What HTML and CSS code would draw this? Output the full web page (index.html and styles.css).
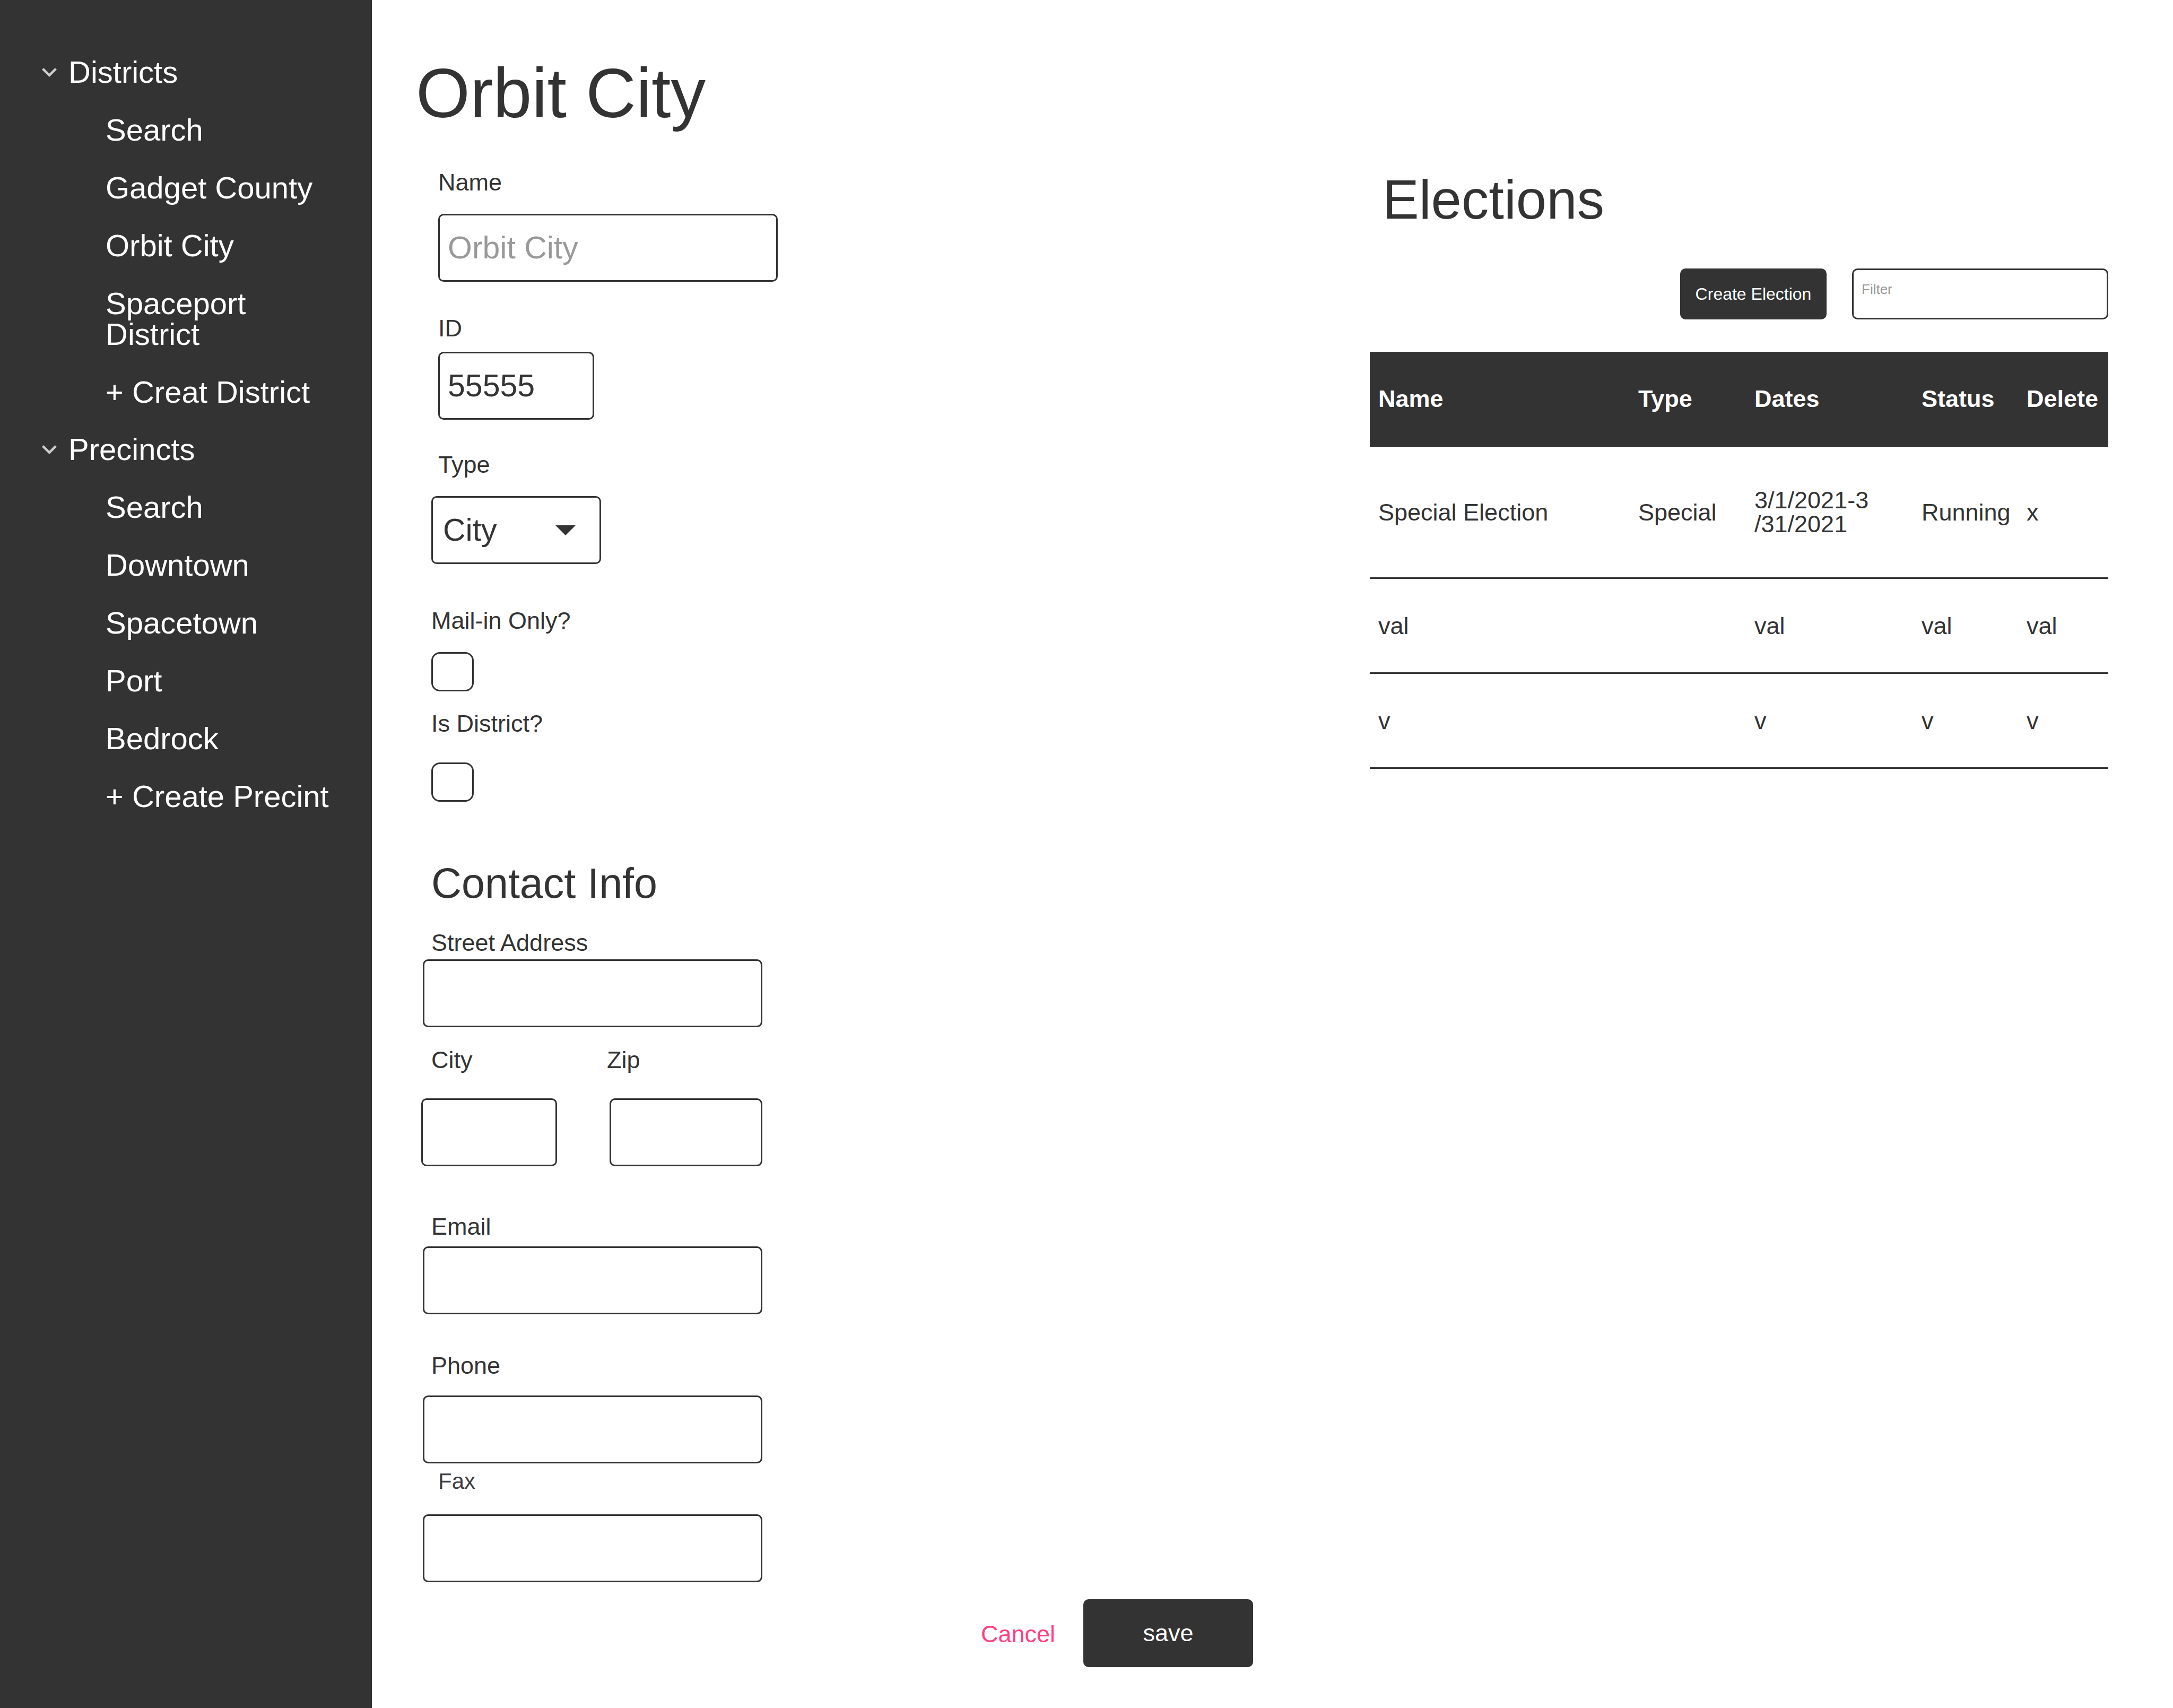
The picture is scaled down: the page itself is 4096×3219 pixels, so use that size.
FILE: index.html
```html
<!DOCTYPE html>
<html lang="en">
<head>
<meta charset="utf-8">
<title>Orbit City</title>
<link rel="stylesheet" href="styles.css">
</head>
<body>
<div class="app">
  <nav class="sidebar">
    <section class="group">
      <h2 class="group-title">
        <svg class="chevron" viewBox="0 0 28 17" aria-hidden="true"><path d="M3.3 0 14 10.7 24.700 0 28 3.300 14 17 0 3.300z"/></svg>
        Districts
      </h2>
      <ul class="links">
        <li><a href="#">Search</a></li>
        <li><a href="#">Gadget County</a></li>
        <li><a href="#">Orbit City</a></li>
        <li><a href="#">Spaceport<br>District</a></li>
        <li><a href="#">+ Creat District</a></li>
      </ul>
    </section>
    <section class="group">
      <h2 class="group-title">
        <svg class="chevron" viewBox="0 0 28 17" aria-hidden="true"><path d="M3.3 0 14 10.7 24.700 0 28 3.300 14 17 0 3.300z"/></svg>
        Precincts
      </h2>
      <ul class="links">
        <li><a href="#">Search</a></li>
        <li><a href="#">Downtown</a></li>
        <li><a href="#">Spacetown</a></li>
        <li><a href="#">Port</a></li>
        <li><a href="#">Bedrock</a></li>
        <li><a href="#">+ Create Precint</a></li>
      </ul>
    </section>
  </nav>

  <main class="main">
    <h1 class="title">Orbit City</h1>
    <div class="columns">
      <form class="form" id="district">
        <div class="field field-name">
          <label for="name">Name</label>
          <input class="box" id="name" type="text" placeholder="Orbit City">
        </div>
        <div class="field field-id">
          <label for="code">ID</label>
          <input class="box" id="code" type="text" value="55555">
        </div>
        <div class="field field-type">
          <label for="type">Type</label>
          <div class="select">
            <select class="box" id="type"><option>City</option></select>
            <svg class="arrow" viewBox="0 0 38 19" aria-hidden="true"><path d="M0 0h38L19 19z"/></svg>
          </div>
        </div>
        <div class="field field-mail">
          <label for="mail">Mail-in Only?</label>
          <input class="check" id="mail" type="checkbox">
        </div>
        <div class="field field-district">
          <label for="isdistrict">Is District?</label>
          <input class="check" id="isdistrict" type="checkbox">
        </div>

        <h2 class="subtitle">Contact Info</h2>

        <div class="field contact field-street">
          <label for="street">Street Address</label>
          <input class="box" id="street" type="text">
        </div>
        <div class="pair">
          <div class="field field-city">
            <label for="city">City</label>
            <input class="box" id="city" type="text">
          </div>
          <div class="field field-zip">
            <label for="zip">Zip</label>
            <input class="box" id="zip" type="text">
          </div>
        </div>
        <div class="field contact field-email">
          <label for="email">Email</label>
          <input class="box" id="email" type="email">
        </div>
        <div class="field contact field-phone">
          <label for="phone">Phone</label>
          <input class="box" id="phone" type="tel">
        </div>
        <div class="field contact field-fax">
          <label for="fax">Fax</label>
          <input class="box" id="fax" type="tel">
        </div>
      </form>

      <section class="elections">
        <h2 class="elections-title">Elections</h2>
        <div class="toolbar">
          <button class="button button-small" type="button">Create Election</button>
          <input class="box filter" type="text" placeholder="Filter" aria-label="Filter">
        </div>
        <table class="table">
          <colgroup>
            <col><col class="col-type"><col class="col-dates"><col class="col-status"><col class="col-delete">
          </colgroup>
          <thead>
            <tr><th>Name</th><th>Type</th><th>Dates</th><th>Status</th><th>Delete</th></tr>
          </thead>
          <tbody>
            <tr class="tall"><td>Special Election</td><td>Special</td><td>3/1/2021-3<br>/31/2021</td><td>Running</td><td>x</td></tr>
            <tr><td>val</td><td></td><td>val</td><td>val</td><td>val</td></tr>
            <tr><td>v</td><td></td><td>v</td><td>v</td><td>v</td></tr>
          </tbody>
        </table>
      </section>
    </div>

    <div class="actions">
      <a class="cancel" href="#">Cancel</a>
      <button class="button" type="submit" form="district">save</button>
    </div>
  </main>
</div>
</body>
</html>
```
FILE: styles.css
```css
* {
  box-sizing: border-box;
}

body {
  margin: 0;
  background: #fff;
  color: #333;
  font-family: "Liberation Sans", Arial, sans-serif;
  font-size: 45px;
  line-height: 46px;
}

h1,
h2,
ul {
  margin: 0;
  padding: 0;
  font-weight: 400;
}

input,
select,
button {
  margin: 0;
  color: inherit;
  font-family: inherit;
}

.app {
  display: flex;
  min-height: 100vh;
}

/* Sidebar */

.sidebar {
  display: flex;
  flex: none;
  flex-direction: column;
  gap: 50px;
  width: 701px;
  padding-top: 107px;
  background: #333;
  color: #fff;
  font-size: 58px;
  line-height: 58px;
}

.group {
  display: flex;
  flex-direction: column;
  gap: 51px;
}

.group-title {
  display: flex;
  align-items: center;
  gap: 22px;
  padding-left: 79px;
  font-size: 58px;
}

.chevron {
  width: 28px;
  height: 17px;
  fill: #ccc;
}

.links {
  display: flex;
  flex-direction: column;
  gap: 51px;
  padding-left: 199px;
  list-style: none;
}

.links a {
  display: block;
  color: inherit;
  text-decoration: none;
}

/* Page */

.main {
  flex: 1;
  padding: 110px 122px 75px 83px;
}

.title {
  font-size: 131px;
  line-height: 131px;
}

.columns {
  display: grid;
  grid-template-columns: 1798fr 1392fr;
  margin-top: 80px;
}

/* Form */

.form {
  display: flex;
  flex-direction: column;
  align-items: flex-start;
}

.field {
  display: flex;
  flex-direction: column;
  align-items: flex-start;
  gap: 36px;
  margin-left: 29px;
}

.box {
  width: 640px;
  height: 128px;
  padding: 0 15px;
  border: 3px solid #333;
  border-radius: 10px;
  background: #fff;
  font-size: 59px;
}

.box::placeholder {
  color: #999;
  opacity: 1;
}

.field-name {
  margin-left: 42px;
}

.field-id {
  gap: 21px;
  margin: 65px 0 62px 42px;
}

.field-id .box {
  width: 294px;
}

.field-type label {
  padding-left: 13px;
}

.select {
  display: flex;
  position: relative;
}

.select .box {
  width: 320px;
  padding: 0 19px;
  appearance: none;
}

.arrow {
  position: absolute;
  top: 55px;
  right: 48px;
  width: 38px;
  height: 19px;
  fill: #333;
  pointer-events: none;
}

.check {
  width: 80px;
  height: 74px;
  border: 3px solid #333;
  border-radius: 16px;
  background: #fff;
  appearance: none;
}

.field-mail {
  margin-top: 84px;
}

.field-district {
  gap: 50px;
  margin-top: 38px;
}

.subtitle {
  margin: 114px 0 50px 29px;
  font-size: 79px;
  line-height: 79px;
}

.contact {
  margin-left: 13px;
}

.contact label {
  padding-left: 16px;
}

.field-street {
  gap: 8px;
}

.pair {
  display: flex;
  gap: 94px;
  margin: 39px 0 91px 10px;
}

.pair .field {
  gap: 49px;
  margin-left: 0;
}

.field-city label {
  padding-left: 19px;
}

.field-city .box {
  width: 256px;
}

.field-zip .box {
  width: 288px;
  margin-left: 5px;
}

.field-email {
  gap: 14px;
}

.field-phone {
  gap: 33px;
  margin-top: 74px;
}

.field-fax {
  gap: 39px;
  margin-top: 11px;
}

.contact.field-fax label {
  padding-left: 29px;
  color: #404040;
  font-size: 42px;
}

/* Elections */

.elections {
  padding-top: 4px;
}

.elections-title {
  padding-left: 24px;
  font-size: 103px;
  line-height: 104px;
}

.toolbar {
  display: flex;
  justify-content: flex-end;
  gap: 48px;
  margin: 77px 0 61px;
}

.filter {
  width: 483px;
  height: 96px;
  padding-bottom: 18px;
  font-size: 26px;
}

.button {
  width: 320px;
  height: 128px;
  padding: 0;
  border: 0;
  border-radius: 10px;
  background: #333;
  color: #fff;
  font-size: 45px;
}

.button-small {
  width: 276px;
  height: 96px;
  font-size: 32px;
}

.table {
  width: 100%;
  border-spacing: 0;
  table-layout: fixed;
}

.col-type {
  width: 219px;
}

.col-dates {
  width: 315px;
}

.col-status {
  width: 198px;
}

.col-delete {
  width: 170px;
}

.table th,
.table td {
  height: 179px;
  padding: 0 0 0 16px;
  border-bottom: 3px solid #333;
  line-height: 45px;
  text-align: left;
  vertical-align: middle;
}

.table th {
  background: #333;
  color: #fff;
}

.table .tall td {
  height: 249px;
}

/* Footer actions */

.actions {
  display: flex;
  align-items: center;
  gap: 53px;
  margin-top: 32px;
  padding-left: 1065px;
}

.cancel {
  padding-top: 4px;
  color: #ff4081;
  text-decoration: none;
}
```
